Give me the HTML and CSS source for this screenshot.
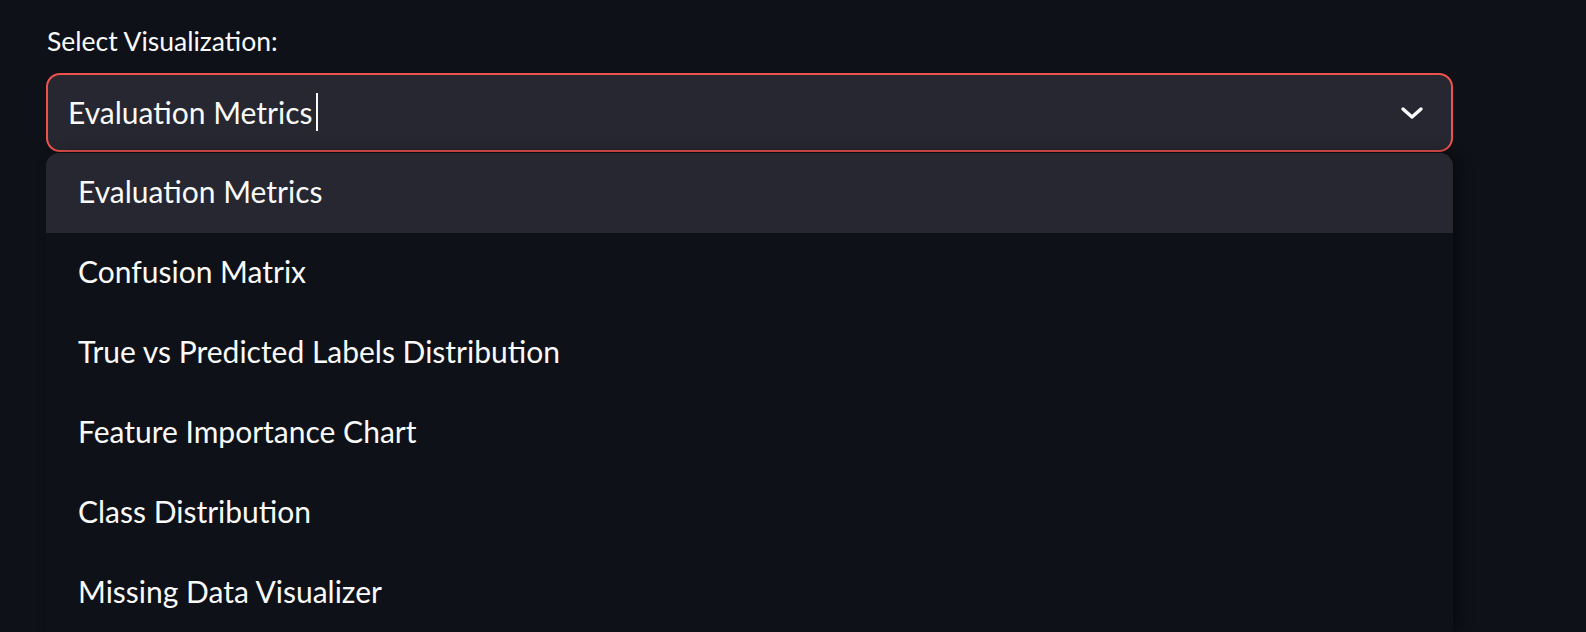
FILE: index.html
```html
<!DOCTYPE html>
<html>
<head>
<meta charset="utf-8">
<link rel="stylesheet" href="styles.css">
</head>
<body>
<div class="page">
  <div class="label">Select Visualization:</div>
  <div class="select">
    <div class="value">Evaluation Metrics<span class="caret"></span></div>
    <svg class="chev" width="26" height="26" viewBox="0 0 26 26"><path d="M4 9l9 8 9-8" fill="none" stroke="#fafafa" stroke-width="3.4" stroke-linecap="round" stroke-linejoin="round"/></svg>
  </div>
  <ul class="menu">
    <li class="item active">Evaluation Metrics</li>
    <li class="item">Confusion Matrix</li>
    <li class="item">True vs Predicted Labels Distribution</li>
    <li class="item">Feature Importance Chart</li>
    <li class="item">Class Distribution</li>
    <li class="item">Missing Data Visualizer</li>
  </ul>
</div>
</body>
</html>
```
FILE: styles.css
```css
html, body {
  margin: 0;
  padding: 0;
  background: #0e1117;
  height: 632px;
  overflow: hidden;
}
body {
  font-family: "Lato", "Liberation Sans", sans-serif;
  color: #fafafa;
}
.page {
  width: 1407px;
  padding-left: 46px;
  padding-top: 25px;
}
.label {
  font-size: 26.5px;
  line-height: 32px;
  height: 32px;
  margin-bottom: 16px;
  padding-left: 1px;
}
.select {
  box-sizing: border-box;
  height: 79px;
  border: 2px solid #ee524e;
  border-radius: 14px;
  background: #262730;
  display: flex;
  align-items: center;
  justify-content: space-between;
  padding: 0 26px 0 20px;
}
.value {
  font-size: 30px;
  line-height: 36px;
  display: flex;
  align-items: center;
  margin-top: -1px;
}
.caret {
  display: inline-block;
  width: 2px;
  height: 38px;
  background: #fafafa;
  margin-left: 4px;
}
.chev { display: block; }
.menu {
  list-style: none;
  margin: 1px 0 0 0;
  padding: 0;
  background: #0e1117;
  border-radius: 13px 13px 0 0;
  overflow: hidden;
  box-shadow: 6px 0 14px rgba(0,0,0,0.45);
}
.item {
  height: 80px;
  box-sizing: border-box;
  line-height: 76px;
  padding-bottom: 4px;
  font-size: 30px;
  padding-left: 32px;
}
.item.active {
  background: #262730;
}
```
